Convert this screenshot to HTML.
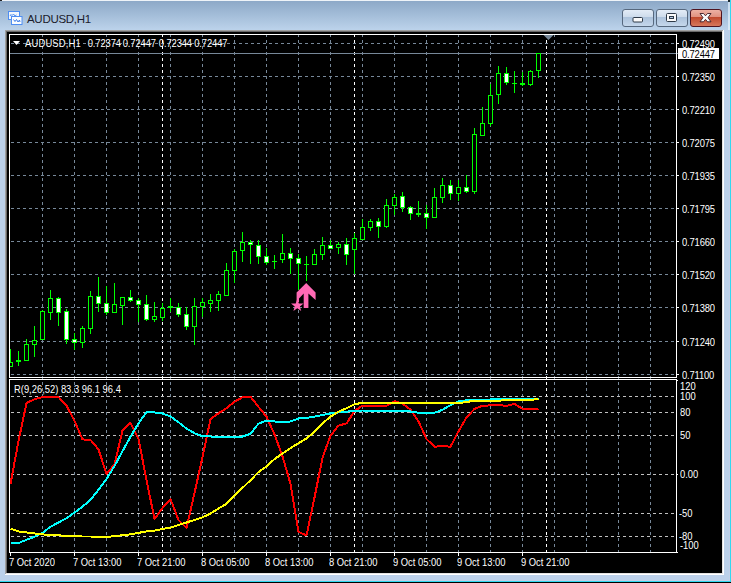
<!DOCTYPE html>
<html><head><meta charset="utf-8">
<style>
html,body{margin:0;padding:0;}
body{width:731px;height:583px;overflow:hidden;position:relative;background:#bcd1ea;font-family:"Liberation Sans", sans-serif;}
.tb{position:absolute;left:0;top:0;width:731px;height:30px;background:linear-gradient(#8ba7c6,#bcd3eb);}
.t{position:absolute;white-space:nowrap;color:#fff;font-size:9.4px;line-height:14px;transform:scaleY(1.08);transform-origin:0 0;}
.hdr{letter-spacing:0px;}
.pl{letter-spacing:-0.15px;}
.il{letter-spacing:0px;}
.ilb{letter-spacing:0px;}
.tl{letter-spacing:0px;}
.title{position:absolute;left:27px;top:11px;font-size:11.5px;line-height:16px;color:#1b1b2b;letter-spacing:-0.3px;white-space:nowrap;}
.btn{position:absolute;top:9px;width:30px;height:16px;border:1px solid #5f7185;border-radius:3px;background:linear-gradient(#dfe9f5 0%,#c8d8ea 45%,#a9bfd8 50%,#bcd0e6 100%);}
.cls{border-color:#6b2418;background:linear-gradient(#e8a396 0%,#d98070 45%,#c0442c 50%,#d0583a 100%);}
</style></head><body>
<div class="tb"></div>
<div style="position:absolute;left:0;top:0;width:731px;height:1px;background:#eef3f8"></div><div style="position:absolute;left:0;top:0;width:2px;height:1px;background:#222"></div><div style="position:absolute;left:728px;top:0;width:3px;height:2px;background:#1a2a30"></div>
<div style="position:absolute;left:728px;top:2px;width:2px;height:28px;background:linear-gradient(#c8dcf0,#dceaf8)"></div><div style="position:absolute;left:729px;top:30px;width:1px;height:551px;background:#c4d0e8"></div><div style="position:absolute;left:0;top:580px;width:730px;height:1px;background:#c4d0e8"></div><div style="position:absolute;left:730px;top:0;width:1px;height:583px;background:#30d8f0"></div>
<div style="position:absolute;left:0;top:581px;width:731px;height:1px;background:#30d8f0"></div>
<div style="position:absolute;left:0;top:582px;width:731px;height:1px;background:#000"></div>
<svg style="position:absolute;left:0;top:0" width="30" height="30">
<rect x="8.5" y="11.5" width="11" height="8" fill="#f4f8fc" stroke="#4f8ef2"/>
<polyline points="10,16 11,14.5 12,15.5 13.5,14 15,16 16.5,15" fill="none" stroke="#4f8ef2" stroke-width="1"/>
<rect x="11.5" y="16.5" width="10.5" height="8" fill="#fbfdff" stroke="#4f8ef2"/>
<polyline points="13.5,19.5 15,21.5 16.5,19.5 18,22 19.5,20 20,22" fill="none" stroke="#3f7ee8" stroke-width="1"/>
</svg>
<div class="title">AUDUSD,H1</div>
<svg style="position:absolute;left:620px;top:7px" width="106" height="22" viewBox="0 0 106 22">
<defs>
<linearGradient id="bg1" x1="0" y1="0" x2="0" y2="1">
<stop offset="0" stop-color="#e4edf7"/><stop offset="0.45" stop-color="#cddbeb"/><stop offset="0.47" stop-color="#adc3dc"/><stop offset="1" stop-color="#c6d8ec"/></linearGradient>
<linearGradient id="bg2" x1="0" y1="0" x2="0" y2="1">
<stop offset="0" stop-color="#eeb3a6"/><stop offset="0.45" stop-color="#e0907e"/><stop offset="0.47" stop-color="#c14a2e"/><stop offset="1" stop-color="#d87a5e"/></linearGradient>
</defs>
<rect x="2.5" y="2.5" width="31" height="17" rx="2.5" fill="url(#bg1)" stroke="#56687e"/>
<rect x="36.5" y="2.5" width="31" height="17" rx="2.5" fill="url(#bg1)" stroke="#56687e"/>
<rect x="70.5" y="2.5" width="31" height="17" rx="2.5" fill="url(#bg2)" stroke="#4e1420"/>
<rect x="13" y="10.5" width="9.5" height="4.5" rx="1" fill="#fafafa" stroke="#2e3a48"/>
<rect x="46.5" y="6.5" width="10" height="8" rx="1" fill="#fafafa" stroke="#2e3a48"/>
<rect x="49.5" y="9.5" width="4" height="2" fill="#b8cde4" stroke="#2e3a48"/>
<path d="M80,6.5 L83.5,6.5 L85.5,8.8 L87.5,6.5 L91,6.5 L88,10.6 L91,14.8 L87.5,14.8 L85.5,12.4 L83.5,14.8 L80,14.8 L83,10.6 Z" fill="#fafafa" stroke="#3a1a22" stroke-width="0.9" stroke-linejoin="round"/>
</svg>
<svg style="position:absolute;left:0;top:0" width="731" height="583"><rect x="7" y="32" width="715" height="541" fill="#000"/><rect x="5" y="30" width="719" height="1" fill="#a0a0a0"/><rect x="5" y="30" width="1" height="545" fill="#a0a0a0"/><rect x="6" y="31" width="717" height="1" fill="#696969"/><rect x="6" y="31" width="1" height="543" fill="#696969"/><rect x="6" y="573" width="717" height="1" fill="#e3e3e3"/><rect x="722" y="31" width="1" height="543" fill="#e3e3e3"/><rect x="5" y="574" width="719" height="1" fill="#ffffff"/><rect x="723" y="30" width="1" height="545" fill="#ffffff"/><g shape-rendering="crispEdges"><line x1="42.5" y1="34" x2="42.5" y2="552" stroke="#778899" stroke-dasharray="3 3"/><line x1="74.5" y1="34" x2="74.5" y2="552" stroke="#778899" stroke-dasharray="3 3"/><line x1="106.5" y1="34" x2="106.5" y2="552" stroke="#778899" stroke-dasharray="3 3"/><line x1="138.5" y1="34" x2="138.5" y2="552" stroke="#778899" stroke-dasharray="3 3"/><line x1="170.5" y1="34" x2="170.5" y2="552" stroke="#778899" stroke-dasharray="3 3"/><line x1="202.5" y1="34" x2="202.5" y2="552" stroke="#778899" stroke-dasharray="3 3"/><line x1="234.5" y1="34" x2="234.5" y2="552" stroke="#778899" stroke-dasharray="3 3"/><line x1="266.5" y1="34" x2="266.5" y2="552" stroke="#778899" stroke-dasharray="3 3"/><line x1="298.5" y1="34" x2="298.5" y2="552" stroke="#778899" stroke-dasharray="3 3"/><line x1="330.5" y1="34" x2="330.5" y2="552" stroke="#778899" stroke-dasharray="3 3"/><line x1="362.5" y1="34" x2="362.5" y2="552" stroke="#778899" stroke-dasharray="3 3"/><line x1="394.5" y1="34" x2="394.5" y2="552" stroke="#778899" stroke-dasharray="3 3"/><line x1="426.5" y1="34" x2="426.5" y2="552" stroke="#778899" stroke-dasharray="3 3"/><line x1="458.5" y1="34" x2="458.5" y2="552" stroke="#778899" stroke-dasharray="3 3"/><line x1="490.5" y1="34" x2="490.5" y2="552" stroke="#778899" stroke-dasharray="3 3"/><line x1="522.5" y1="34" x2="522.5" y2="552" stroke="#778899" stroke-dasharray="3 3"/><line x1="554.5" y1="34" x2="554.5" y2="552" stroke="#778899" stroke-dasharray="3 3"/><line x1="586.5" y1="34" x2="586.5" y2="552" stroke="#778899" stroke-dasharray="3 3"/><line x1="618.5" y1="34" x2="618.5" y2="552" stroke="#778899" stroke-dasharray="3 3"/><line x1="650.5" y1="34" x2="650.5" y2="552" stroke="#778899" stroke-dasharray="3 3"/><line x1="162.5" y1="34" x2="162.5" y2="552" stroke="#ffffff" stroke-dasharray="3 3"/><line x1="354.5" y1="34" x2="354.5" y2="552" stroke="#ffffff" stroke-dasharray="3 3"/><line x1="546.5" y1="34" x2="546.5" y2="552" stroke="#ffffff" stroke-dasharray="3 3"/><line x1="11" y1="43.5" x2="676" y2="43.5" stroke="#778899" stroke-dasharray="3 3"/><line x1="11" y1="76.5" x2="676" y2="76.5" stroke="#778899" stroke-dasharray="3 3"/><line x1="11" y1="109.5" x2="676" y2="109.5" stroke="#778899" stroke-dasharray="3 3"/><line x1="11" y1="142.5" x2="676" y2="142.5" stroke="#778899" stroke-dasharray="3 3"/><line x1="11" y1="175.5" x2="676" y2="175.5" stroke="#778899" stroke-dasharray="3 3"/><line x1="11" y1="208.5" x2="676" y2="208.5" stroke="#778899" stroke-dasharray="3 3"/><line x1="11" y1="241.5" x2="676" y2="241.5" stroke="#778899" stroke-dasharray="3 3"/><line x1="11" y1="274.5" x2="676" y2="274.5" stroke="#778899" stroke-dasharray="3 3"/><line x1="11" y1="307.5" x2="676" y2="307.5" stroke="#778899" stroke-dasharray="3 3"/><line x1="11" y1="341.5" x2="676" y2="341.5" stroke="#778899" stroke-dasharray="3 3"/><line x1="11" y1="374.5" x2="676" y2="374.5" stroke="#778899" stroke-dasharray="3 3"/><line x1="11" y1="396.5" x2="676" y2="396.5" stroke="#c0c0c0" stroke-dasharray="3 3"/><line x1="11" y1="412.5" x2="676" y2="412.5" stroke="#c0c0c0" stroke-dasharray="3 3"/><line x1="11" y1="435.5" x2="676" y2="435.5" stroke="#c0c0c0" stroke-dasharray="3 3"/><line x1="11" y1="474.5" x2="676" y2="474.5" stroke="#c0c0c0" stroke-dasharray="3 3"/><line x1="11" y1="513.5" x2="676" y2="513.5" stroke="#c0c0c0" stroke-dasharray="3 3"/><line x1="11" y1="536.5" x2="676" y2="536.5" stroke="#c0c0c0" stroke-dasharray="3 3"/></g><clipPath id="cp"><rect x="10" y="35" width="666" height="342"/></clipPath><clipPath id="ci"><rect x="10" y="380" width="666" height="172"/></clipPath><rect x="10" y="53" width="668" height="1" fill="#778899"/><g clip-path="url(#cp)" shape-rendering="crispEdges"><rect x="10" y="349" width="1" height="18" fill="#00ff00"/><rect x="8" y="362" width="5" height="5" fill="#00ff00"/><rect x="9" y="363" width="3" height="3" fill="#000000"/><rect x="18" y="351" width="1" height="15" fill="#00ff00"/><rect x="16" y="360" width="5" height="2" fill="#00ff00"/><rect x="26" y="339" width="1" height="22" fill="#00ff00"/><rect x="24" y="344" width="5" height="17" fill="#00ff00"/><rect x="25" y="345" width="3" height="15" fill="#000000"/><rect x="34" y="326" width="1" height="31" fill="#00ff00"/><rect x="32" y="340" width="5" height="5" fill="#00ff00"/><rect x="33" y="341" width="3" height="3" fill="#000000"/><rect x="42" y="310" width="1" height="30" fill="#00ff00"/><rect x="40" y="311" width="5" height="29" fill="#00ff00"/><rect x="41" y="312" width="3" height="27" fill="#000000"/><rect x="50" y="290" width="1" height="30" fill="#00ff00"/><rect x="48" y="298" width="5" height="15" fill="#00ff00"/><rect x="49" y="299" width="3" height="13" fill="#000000"/><rect x="58" y="297" width="1" height="29" fill="#00ff00"/><rect x="56" y="298" width="5" height="15" fill="#00ff00"/><rect x="57" y="299" width="3" height="13" fill="#ffffff"/><rect x="66" y="309" width="1" height="35" fill="#00ff00"/><rect x="64" y="311" width="5" height="29" fill="#00ff00"/><rect x="65" y="312" width="3" height="27" fill="#ffffff"/><rect x="74" y="333" width="1" height="17" fill="#00ff00"/><rect x="72" y="339" width="5" height="4" fill="#00ff00"/><rect x="73" y="340" width="3" height="2" fill="#ffffff"/><rect x="82" y="326" width="1" height="22" fill="#00ff00"/><rect x="80" y="328" width="5" height="15" fill="#00ff00"/><rect x="81" y="329" width="3" height="13" fill="#000000"/><rect x="90" y="291" width="1" height="43" fill="#00ff00"/><rect x="88" y="296" width="5" height="33" fill="#00ff00"/><rect x="89" y="297" width="3" height="31" fill="#000000"/><rect x="98" y="277" width="1" height="35" fill="#00ff00"/><rect x="96" y="296" width="5" height="8" fill="#00ff00"/><rect x="97" y="297" width="3" height="6" fill="#ffffff"/><rect x="106" y="286" width="1" height="29" fill="#00ff00"/><rect x="104" y="303" width="5" height="10" fill="#00ff00"/><rect x="105" y="304" width="3" height="8" fill="#ffffff"/><rect x="114" y="283" width="1" height="29" fill="#00ff00"/><rect x="112" y="304" width="5" height="9" fill="#00ff00"/><rect x="113" y="305" width="3" height="7" fill="#000000"/><rect x="122" y="297" width="1" height="28" fill="#00ff00"/><rect x="120" y="297" width="5" height="9" fill="#00ff00"/><rect x="121" y="298" width="3" height="7" fill="#000000"/><rect x="130" y="290" width="1" height="12" fill="#00ff00"/><rect x="128" y="297" width="5" height="4" fill="#00ff00"/><rect x="129" y="298" width="3" height="2" fill="#ffffff"/><rect x="138" y="298" width="1" height="24" fill="#00ff00"/><rect x="136" y="300" width="5" height="5" fill="#00ff00"/><rect x="137" y="301" width="3" height="3" fill="#ffffff"/><rect x="146" y="295" width="1" height="26" fill="#00ff00"/><rect x="144" y="304" width="5" height="16" fill="#00ff00"/><rect x="145" y="305" width="3" height="14" fill="#ffffff"/><rect x="154" y="302" width="1" height="20" fill="#00ff00"/><rect x="152" y="316" width="5" height="4" fill="#00ff00"/><rect x="153" y="317" width="3" height="2" fill="#000000"/><rect x="162" y="303" width="1" height="18" fill="#00ff00"/><rect x="160" y="308" width="5" height="10" fill="#00ff00"/><rect x="161" y="309" width="3" height="8" fill="#000000"/><rect x="170" y="298" width="1" height="14" fill="#00ff00"/><rect x="168" y="306" width="5" height="2" fill="#00ff00"/><rect x="178" y="303" width="1" height="14" fill="#00ff00"/><rect x="176" y="307" width="5" height="8" fill="#00ff00"/><rect x="177" y="308" width="3" height="6" fill="#ffffff"/><rect x="186" y="307" width="1" height="23" fill="#00ff00"/><rect x="184" y="314" width="5" height="13" fill="#00ff00"/><rect x="185" y="315" width="3" height="11" fill="#ffffff"/><rect x="194" y="298" width="1" height="47" fill="#00ff00"/><rect x="192" y="306" width="5" height="21" fill="#00ff00"/><rect x="193" y="307" width="3" height="19" fill="#000000"/><rect x="202" y="298" width="1" height="19" fill="#00ff00"/><rect x="200" y="302" width="5" height="5" fill="#00ff00"/><rect x="201" y="303" width="3" height="3" fill="#000000"/><rect x="210" y="294" width="1" height="18" fill="#00ff00"/><rect x="208" y="300" width="5" height="4" fill="#00ff00"/><rect x="209" y="301" width="3" height="2" fill="#000000"/><rect x="218" y="291" width="1" height="20" fill="#00ff00"/><rect x="216" y="294" width="5" height="7" fill="#00ff00"/><rect x="217" y="295" width="3" height="5" fill="#000000"/><rect x="226" y="263" width="1" height="32" fill="#00ff00"/><rect x="224" y="270" width="5" height="26" fill="#00ff00"/><rect x="225" y="271" width="3" height="24" fill="#000000"/><rect x="234" y="249" width="1" height="34" fill="#00ff00"/><rect x="232" y="251" width="5" height="20" fill="#00ff00"/><rect x="233" y="252" width="3" height="18" fill="#000000"/><rect x="242" y="232" width="1" height="30" fill="#00ff00"/><rect x="240" y="242" width="5" height="9" fill="#00ff00"/><rect x="241" y="243" width="3" height="7" fill="#000000"/><rect x="250" y="240" width="1" height="24" fill="#00ff00"/><rect x="248" y="242" width="5" height="3" fill="#00ff00"/><rect x="249" y="243" width="3" height="1" fill="#ffffff"/><rect x="258" y="240" width="1" height="24" fill="#00ff00"/><rect x="256" y="245" width="5" height="12" fill="#00ff00"/><rect x="257" y="246" width="3" height="10" fill="#ffffff"/><rect x="266" y="248" width="1" height="17" fill="#00ff00"/><rect x="264" y="256" width="5" height="7" fill="#00ff00"/><rect x="265" y="257" width="3" height="5" fill="#ffffff"/><rect x="274" y="255" width="1" height="14" fill="#00ff00"/><rect x="272" y="261" width="5" height="1" fill="#00ff00"/><rect x="282" y="234" width="1" height="29" fill="#00ff00"/><rect x="280" y="253" width="5" height="7" fill="#00ff00"/><rect x="281" y="254" width="3" height="5" fill="#000000"/><rect x="290" y="248" width="1" height="26" fill="#00ff00"/><rect x="288" y="253" width="5" height="6" fill="#00ff00"/><rect x="289" y="254" width="3" height="4" fill="#ffffff"/><rect x="298" y="254" width="1" height="36" fill="#00ff00"/><rect x="296" y="258" width="5" height="6" fill="#00ff00"/><rect x="297" y="259" width="3" height="4" fill="#ffffff"/><rect x="306" y="256" width="1" height="25" fill="#00ff00"/><rect x="304" y="264" width="5" height="1" fill="#00ff00"/><rect x="314" y="249" width="1" height="15" fill="#00ff00"/><rect x="312" y="254" width="5" height="11" fill="#00ff00"/><rect x="313" y="255" width="3" height="9" fill="#000000"/><rect x="322" y="237" width="1" height="23" fill="#00ff00"/><rect x="320" y="245" width="5" height="10" fill="#00ff00"/><rect x="321" y="246" width="3" height="8" fill="#000000"/><rect x="330" y="240" width="1" height="9" fill="#00ff00"/><rect x="328" y="245" width="5" height="4" fill="#00ff00"/><rect x="329" y="246" width="3" height="2" fill="#ffffff"/><rect x="338" y="242" width="1" height="12" fill="#00ff00"/><rect x="336" y="244" width="5" height="4" fill="#00ff00"/><rect x="337" y="245" width="3" height="2" fill="#000000"/><rect x="346" y="238" width="1" height="27" fill="#00ff00"/><rect x="344" y="244" width="5" height="11" fill="#00ff00"/><rect x="345" y="245" width="3" height="9" fill="#ffffff"/><rect x="354" y="233" width="1" height="41" fill="#00ff00"/><rect x="352" y="238" width="5" height="12" fill="#00ff00"/><rect x="353" y="239" width="3" height="10" fill="#000000"/><rect x="362" y="219" width="1" height="21" fill="#00ff00"/><rect x="360" y="227" width="5" height="13" fill="#00ff00"/><rect x="361" y="228" width="3" height="11" fill="#000000"/><rect x="370" y="219" width="1" height="12" fill="#00ff00"/><rect x="368" y="221" width="5" height="7" fill="#00ff00"/><rect x="369" y="222" width="3" height="5" fill="#000000"/><rect x="378" y="218" width="1" height="20" fill="#00ff00"/><rect x="376" y="221" width="5" height="6" fill="#00ff00"/><rect x="377" y="222" width="3" height="4" fill="#ffffff"/><rect x="386" y="199" width="1" height="29" fill="#00ff00"/><rect x="384" y="205" width="5" height="22" fill="#00ff00"/><rect x="385" y="206" width="3" height="20" fill="#000000"/><rect x="394" y="194" width="1" height="21" fill="#00ff00"/><rect x="392" y="197" width="5" height="9" fill="#00ff00"/><rect x="393" y="198" width="3" height="7" fill="#000000"/><rect x="402" y="192" width="1" height="20" fill="#00ff00"/><rect x="400" y="196" width="5" height="12" fill="#00ff00"/><rect x="401" y="197" width="3" height="10" fill="#ffffff"/><rect x="410" y="206" width="1" height="14" fill="#00ff00"/><rect x="408" y="207" width="5" height="7" fill="#00ff00"/><rect x="409" y="208" width="3" height="5" fill="#ffffff"/><rect x="418" y="201" width="1" height="16" fill="#00ff00"/><rect x="416" y="213" width="5" height="2" fill="#00ff00"/><rect x="426" y="205" width="1" height="24" fill="#00ff00"/><rect x="424" y="213" width="5" height="5" fill="#00ff00"/><rect x="425" y="214" width="3" height="3" fill="#ffffff"/><rect x="434" y="188" width="1" height="30" fill="#00ff00"/><rect x="432" y="197" width="5" height="21" fill="#00ff00"/><rect x="433" y="198" width="3" height="19" fill="#000000"/><rect x="442" y="178" width="1" height="25" fill="#00ff00"/><rect x="440" y="185" width="5" height="13" fill="#00ff00"/><rect x="441" y="186" width="3" height="11" fill="#000000"/><rect x="450" y="180" width="1" height="20" fill="#00ff00"/><rect x="448" y="185" width="5" height="9" fill="#00ff00"/><rect x="449" y="186" width="3" height="7" fill="#ffffff"/><rect x="458" y="180" width="1" height="21" fill="#00ff00"/><rect x="456" y="187" width="5" height="7" fill="#00ff00"/><rect x="457" y="188" width="3" height="5" fill="#000000"/><rect x="466" y="175" width="1" height="18" fill="#00ff00"/><rect x="464" y="187" width="5" height="5" fill="#00ff00"/><rect x="465" y="188" width="3" height="3" fill="#ffffff"/><rect x="474" y="128" width="1" height="66" fill="#00ff00"/><rect x="472" y="134" width="5" height="58" fill="#00ff00"/><rect x="473" y="135" width="3" height="56" fill="#000000"/><rect x="482" y="107" width="1" height="29" fill="#00ff00"/><rect x="480" y="123" width="5" height="13" fill="#00ff00"/><rect x="481" y="124" width="3" height="11" fill="#000000"/><rect x="490" y="84" width="1" height="42" fill="#00ff00"/><rect x="488" y="95" width="5" height="29" fill="#00ff00"/><rect x="489" y="96" width="3" height="27" fill="#000000"/><rect x="498" y="66" width="1" height="38" fill="#00ff00"/><rect x="496" y="73" width="5" height="22" fill="#00ff00"/><rect x="497" y="74" width="3" height="20" fill="#000000"/><rect x="506" y="67" width="1" height="18" fill="#00ff00"/><rect x="504" y="73" width="5" height="10" fill="#00ff00"/><rect x="505" y="74" width="3" height="8" fill="#ffffff"/><rect x="514" y="71" width="1" height="22" fill="#00ff00"/><rect x="512" y="83" width="5" height="1" fill="#00ff00"/><rect x="522" y="72" width="1" height="14" fill="#00ff00"/><rect x="520" y="83" width="5" height="2" fill="#00ff00"/><rect x="530" y="70" width="1" height="16" fill="#00ff00"/><rect x="528" y="71" width="5" height="14" fill="#00ff00"/><rect x="529" y="72" width="3" height="12" fill="#000000"/><rect x="538" y="53" width="1" height="25" fill="#00ff00"/><rect x="536" y="53" width="5" height="18" fill="#00ff00"/><rect x="537" y="54" width="3" height="16" fill="#000000"/></g><polygon points="543.5,35 553.5,35 548.5,40" fill="#778899"/><g fill="#ff69b4"><polygon points="306.2,283 315.6,292.5 315.6,300 308.4,293.5 308.4,308 303.7,308 303.7,293.5 299,298.5 299,302 296.6,302 296.6,292.5"/></g><polygon points="297.30,299.00 298.89,303.42 303.58,303.56 299.87,306.43 301.18,310.94 297.30,308.30 293.42,310.94 294.73,306.43 291.02,303.56 295.71,303.42" fill="#ff69b4"/><g clip-path="url(#ci)" shape-rendering="crispEdges"><polyline points="10.5,484 18.5,441 26.5,403 34.5,399.3 42.5,397 50.5,396.7 58.5,397 66.5,405.5 74.5,420.9 82.5,439.4 90.5,439.9 98.5,449.4 106.5,473.8 114.5,464.5 122.5,430.6 130.5,422.8 138.5,438.8 146.5,480 154.5,519 162.5,508 170.5,499 178.5,520 186.5,528 194.5,493 202.5,457 210.5,419 218.5,413.3 226.5,408.2 234.5,401.7 242.5,397.3 250.5,396.6 258.5,406.9 266.5,416.6 274.5,434.4 282.5,456.4 290.5,483.8 298.5,531.8 306.5,535.4 314.5,497.5 322.5,457.7 330.5,435.8 338.5,425.6 346.5,423.4 354.5,411.1 362.5,405.6 370.5,405.6 378.5,405.8 386.5,405.8 394.5,401.2 402.5,403.5 410.5,409.7 418.5,421.3 426.5,439 434.5,446.7 442.5,446 450.5,446.7 458.5,431.3 466.5,417.4 474.5,408.9 482.5,405.8 490.5,405.4 498.5,405.1 506.5,405.8 514.5,403.8 522.5,408.9 530.5,409.4 538.5,408.9" fill="none" stroke="#ff0000" stroke-width="2" stroke-linejoin="round"/><polyline points="10.5,543 18.5,543 26.5,539.8 34.5,536.8 42.5,532.9 50.5,526.7 58.5,522.5 66.5,518.2 74.5,512.5 82.5,506.7 90.5,499.7 98.5,489.7 106.5,478.9 114.5,466 122.5,451.2 130.5,436.7 138.5,423.4 146.5,412 154.5,412.5 162.5,413.5 170.5,416.5 178.5,422.2 186.5,428.6 194.5,433.2 202.5,436.3 210.5,436.5 218.5,436.5 226.5,436.5 234.5,436.5 242.5,436.5 250.5,433.9 258.5,423.6 266.5,420.7 274.5,421.5 282.5,422 290.5,421.5 298.5,418.5 306.5,417.9 314.5,416.6 322.5,415.1 330.5,413.3 338.5,412.4 346.5,411.6 354.5,411.1 362.5,410.5 370.5,410.7 378.5,410.9 386.5,410.9 394.5,410.9 402.5,410.9 410.5,411.5 418.5,412.8 426.5,412.8 434.5,412.8 442.5,409.7 450.5,405.1 458.5,401.2 466.5,400.4 474.5,399.7 482.5,399.7 490.5,399.5 498.5,399.4 506.5,399.4 514.5,399.4 522.5,399.4 530.5,399.4 538.5,399.4" fill="none" stroke="#00ffff" stroke-width="2" stroke-linejoin="round"/><polyline points="10.5,528.6 18.5,531.4 26.5,532.4 34.5,533.4 42.5,534.4 50.5,534.9 58.5,535.2 66.5,536.3 74.5,536.4 82.5,536.5 90.5,536.5 98.5,536.5 106.5,536.8 114.5,536.3 122.5,535.2 130.5,534.4 138.5,532.9 146.5,531.4 154.5,530.6 162.5,528.9 170.5,527.6 178.5,525 186.5,522.5 194.5,520 202.5,517.3 210.5,513.6 218.5,508.5 226.5,503.9 234.5,495.6 242.5,487.9 250.5,480.2 258.5,472 266.5,466.5 274.5,459.1 282.5,453.6 290.5,448.1 298.5,443.2 306.5,438.5 314.5,431.7 322.5,423.4 330.5,416.6 338.5,411.6 346.5,408.3 354.5,404.2 362.5,402.8 370.5,402.9 378.5,403.1 386.5,403.1 394.5,403.1 402.5,403.1 410.5,403.1 418.5,403.1 426.5,403.1 434.5,403.1 442.5,403.1 450.5,403.1 458.5,403.1 466.5,402 474.5,400.7 482.5,400.7 490.5,400.7 498.5,400.7 506.5,400 514.5,400 522.5,400 530.5,400 538.5,398.9" fill="none" stroke="#ffff00" stroke-width="2" stroke-linejoin="round"/></g><g shape-rendering="crispEdges" fill="#ffffff"><rect x="9" y="34" width="668" height="1"/><rect x="9" y="377" width="668" height="1"/><rect x="9" y="34" width="1" height="344"/><rect x="676" y="34" width="1" height="344"/><rect x="9" y="379" width="668" height="1"/><rect x="9" y="552" width="668" height="1"/><rect x="9" y="379" width="1" height="174"/><rect x="676" y="379" width="1" height="174"/><rect x="677" y="43" width="2" height="1"/><rect x="677" y="76" width="2" height="1"/><rect x="677" y="109" width="2" height="1"/><rect x="677" y="142" width="2" height="1"/><rect x="677" y="175" width="2" height="1"/><rect x="677" y="208" width="2" height="1"/><rect x="677" y="241" width="2" height="1"/><rect x="677" y="274" width="2" height="1"/><rect x="677" y="307" width="2" height="1"/><rect x="677" y="341" width="2" height="1"/><rect x="677" y="374" width="2" height="1"/><rect x="677" y="380" width="1" height="1"/><rect x="677" y="552" width="1" height="1"/><rect x="677" y="474" width="1" height="1"/><rect x="10" y="553" width="1" height="3"/><rect x="74" y="553" width="1" height="3"/><rect x="138" y="553" width="1" height="3"/><rect x="202" y="553" width="1" height="3"/><rect x="266" y="553" width="1" height="3"/><rect x="330" y="553" width="1" height="3"/><rect x="394" y="553" width="1" height="3"/><rect x="458" y="553" width="1" height="3"/><rect x="522" y="553" width="1" height="3"/></g><polygon points="13,41 20,41 16.5,45" fill="#fff"/></svg>
<div style="position:absolute;left:678px;top:48px;width:41px;height:11px;background:#fff"></div>
<div class="t hdr" style="left:25px;top:36px;letter-spacing:0.2px">AUDUSD,H1</div><div class="t" style="left:87.7px;top:36px;letter-spacing:-0.1px">0.72374</div><div class="t" style="left:122.7px;top:36px;letter-spacing:-0.1px">0.72447</div><div class="t" style="left:158.8px;top:36px;letter-spacing:-0.1px">0.72344</div><div class="t" style="left:194.2px;top:36px;letter-spacing:-0.1px">0.72447</div><div class="t pl" style="left:682px;top:37px;">0.72490</div><div class="t pl" style="left:682px;top:70px;">0.72350</div><div class="t pl" style="left:682px;top:103px;">0.72210</div><div class="t pl" style="left:682px;top:136px;">0.72075</div><div class="t pl" style="left:682px;top:169px;">0.71935</div><div class="t pl" style="left:682px;top:202px;">0.71795</div><div class="t pl" style="left:682px;top:235px;">0.71660</div><div class="t pl" style="left:682px;top:268px;">0.71520</div><div class="t pl" style="left:682px;top:301px;">0.71380</div><div class="t pl" style="left:682px;top:335px;">0.71240</div><div class="t pl" style="left:682px;top:368px;">0.71100</div><div class="t pl" style="left:682px;top:47px;color:#000">0.72447</div><div class="t il" style="left:680px;top:379px;">120</div><div class="t il" style="left:680px;top:389px;">100</div><div class="t il" style="left:680px;top:405px;">80</div><div class="t il" style="left:680px;top:428px;">50</div><div class="t il" style="left:680px;top:467px;">0.00</div><div class="t il" style="left:679px;top:506px;">-50</div><div class="t il" style="left:679px;top:529px;">-80</div><div class="t il" style="left:680px;top:538px;">-100</div><div class="t ilb" style="left:14px;top:382px;">R(9,26,52) 83.3 96.1 96.4</div><div class="t tl" style="left:9px;top:555px;">7 Oct 2020</div><div class="t tl" style="left:73px;top:555px;">7 Oct 13:00</div><div class="t tl" style="left:137px;top:555px;">7 Oct 21:00</div><div class="t tl" style="left:201px;top:555px;">8 Oct 05:00</div><div class="t tl" style="left:265px;top:555px;">8 Oct 13:00</div><div class="t tl" style="left:329px;top:555px;">8 Oct 21:00</div><div class="t tl" style="left:393px;top:555px;">9 Oct 05:00</div><div class="t tl" style="left:457px;top:555px;">9 Oct 13:00</div><div class="t tl" style="left:521px;top:555px;">9 Oct 21:00</div>
</body></html>
